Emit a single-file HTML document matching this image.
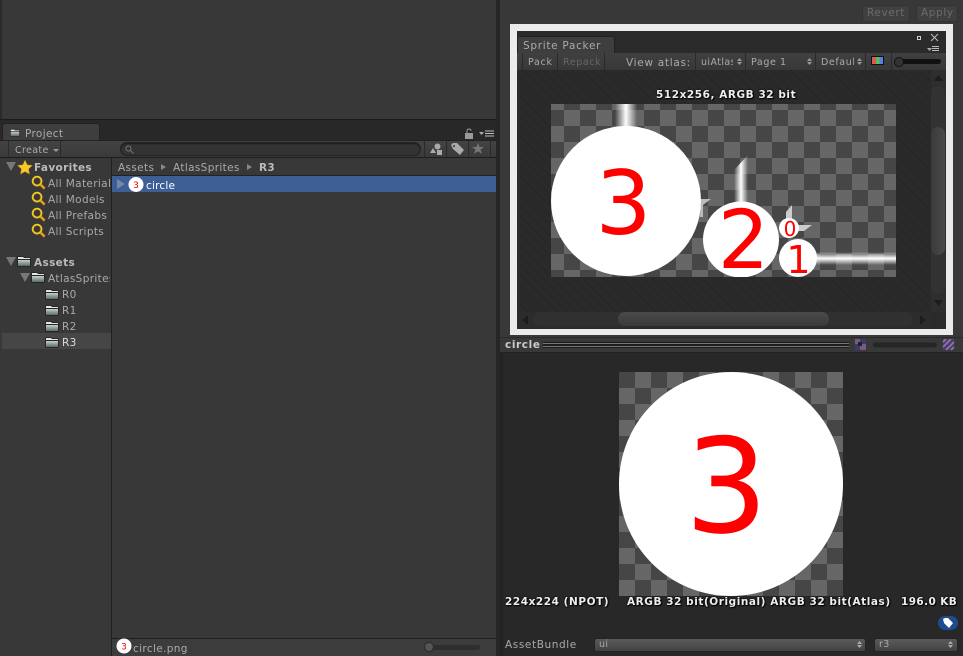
<!DOCTYPE html>
<html><head><meta charset="utf-8"><style>
html,body{margin:0;padding:0;background:#383838}
#r{position:relative;width:963px;height:656px;overflow:hidden;background:#383838;font:10.5px "DejaVu Sans","Liberation Sans",sans-serif;color:#aaa}
#r div,#r span.t,#r svg{position:absolute}
.t{position:absolute;white-space:nowrap;line-height:14px;letter-spacing:.35px}
.b{font-weight:bold;color:#bbb}
.s{font-weight:bold;color:#eee;text-shadow:0 0 2px #000,1px 1px 1px #000;font-size:10.5px;letter-spacing:.55px}
.sep{background:#2a2a2a;width:1px}
.hatch{background-color:#2a2a2a;background-image:repeating-linear-gradient(45deg,#262626 0,#262626 1px,transparent 1px,transparent 7px)}
.dd{background:linear-gradient(#5a5a5a,#434343);border:1px solid #252525;border-radius:3px;height:12px}
</style></head><body><div id="r">
<svg width="0" height="0" style="width:0;height:0"><defs>
<linearGradient id="fg" x2="0" y2="1"><stop offset="0" stop-color="#c4d0d0"/><stop offset="1" stop-color="#5c6a6a"/></linearGradient>
<symbol id="fold" viewBox="0 0 14 12"><path d="M0 2l1-1h5l1 1h6l1 1v8l-1 1H1l-1-1z" fill="#262626"/><path d="M1 2h5l1 1h6v1H1z" fill="#e4e4e4"/><rect x="1" y="5" width="12" height="6" fill="url(#fg)"/></symbol>
<symbol id="mag" viewBox="0 0 16 16"><circle cx="6.500" cy="6.500" r="4.700" fill="none" stroke="#f4c51e" stroke-width="2"/><path d="M10 10l4.500 4.500" stroke="#e0a510" stroke-width="2.600"/></symbol>
</defs></svg>

<!-- top-left panel -->
<div style="left:0;top:0;width:2px;height:119px;background:#2a2a2a"></div>
<div style="left:0;top:119px;width:497px;height:21px;background:#282828;border-top:1px solid #1c1c1c;box-sizing:border-box"></div>
<div style="left:2px;top:123px;width:98px;height:17px;background:#3e3e3e;border-radius:3px 3px 0 0;border:1px solid #222;border-bottom:0;box-sizing:border-box"></div>
<svg style="left:10px;top:128px" width="10" height="9"><use href="#fold"/></svg>
<span class="t" style="left:25px;top:127px">Project</span>
<svg style="left:465px;top:128px" width="30" height="11" viewBox="0 0 30 11"><path d="M2 5V3q0-2 2-2t2 2" fill="none" stroke="#999"/><rect x="0" y="5" width="8" height="6" fill="#999"/><path d="M14 4h5l-2.500 3z" fill="#aaa"/><path d="M20 3h9M20 5.500h9M20 8h9" stroke="#bbb" stroke-width="1"/></svg>

<!-- project toolbar -->
<div style="left:0;top:140px;width:497px;height:18px;background:linear-gradient(#434343,#3a3a3a);border-top:1px solid #222;border-bottom:1px solid #1e1e1e;box-sizing:border-box"></div>
<div class="sep" style="left:8px;top:141px;height:16px"></div>
<div class="sep" style="left:60px;top:141px;height:16px"></div>
<span class="t" style="left:15px;top:144px;font-size:9.5px">Create</span>
<svg style="left:53px;top:149px" width="6" height="4"><path d="M0 0h6l-3 3z" fill="#999"/></svg>
<div style="left:120px;top:142px;width:301px;height:14px;border-radius:7px;background:#333;border:1px solid #222;box-sizing:border-box;box-shadow:inset 0 1px 1px #1d1d1d"></div>
<svg style="left:125px;top:145px" width="9" height="9" viewBox="0 0 9 9"><circle cx="3.500" cy="3.500" r="2.500" fill="none" stroke="#777"/><path d="M5.500 5.500l3 3" stroke="#777"/></svg>
<div class="sep" style="left:424px;top:141px;height:16px"></div>
<div class="sep" style="left:446px;top:141px;height:16px"></div>
<div class="sep" style="left:468px;top:141px;height:16px"></div>
<div class="sep" style="left:490px;top:141px;height:16px"></div>
<svg style="left:430px;top:143px" width="12" height="12" viewBox="0 0 12 12"><path d="M0 10l3-5 3 5z" fill="#aaa"/><circle cx="7.500" cy="3.500" r="3" fill="#aaa"/><rect x="7" y="7" width="5" height="5" fill="#aaa"/></svg>
<svg style="left:451px;top:143px" width="13" height="12" viewBox="0 0 13 12"><path d="M0 2l2-2h4l7 7-4 5-7-6z" fill="#aaa"/><circle cx="3" cy="3" r="1" fill="#3a3a3a"/></svg>
<svg style="left:472px;top:143px" width="12" height="11" viewBox="0 0 12 11"><path d="M6 0l1.500 4H12L8.500 6.500 10 11 6 8.300 2 11l1.500-4.500L0 4h4.500z" fill="#777"/></svg>

<!-- sidebar -->
<div style="left:111px;top:158px;width:1px;height:498px;background:#202020"></div>
<svg style="left:6px;top:162px" width="10" height="9"><path d="M0 0h10l-5 9z" fill="#777"/></svg>
<svg style="left:17px;top:159px" width="16" height="16" viewBox="0 0 16 16"><path d="M8 1l2.200 4.800 5.300.6-3.900 3.600 1 5.200L8 12.600l-4.600 2.600 1-5.200L.5 6.400l5.300-.6z" fill="#f7c92c" stroke="#a97f10" stroke-width=".5"/></svg>
<span class="t b" style="left:34px;top:161px">Favorites</span>
<svg style="left:31px;top:175px" width="15" height="15"><use href="#mag"/></svg><span class="t" style="left:48px;top:177px;width:63px;overflow:hidden">All Materials</span>
<svg style="left:31px;top:191px" width="15" height="15"><use href="#mag"/></svg><span class="t" style="left:48px;top:193px">All Models</span>
<svg style="left:31px;top:207px" width="15" height="15"><use href="#mag"/></svg><span class="t" style="left:48px;top:209px">All Prefabs</span>
<svg style="left:31px;top:223px" width="15" height="15"><use href="#mag"/></svg><span class="t" style="left:48px;top:225px">All Scripts</span>

<svg style="left:6px;top:257px" width="10" height="9"><path d="M0 0h10l-5 9z" fill="#777"/></svg>
<svg style="left:17px;top:255px" width="14" height="12"><use href="#fold"/></svg>
<span class="t b" style="left:34px;top:256px">Assets</span>
<svg style="left:20px;top:273px" width="10" height="9"><path d="M0 0h10l-5 9z" fill="#777"/></svg>
<svg style="left:31px;top:271px" width="14" height="12"><use href="#fold"/></svg>
<span class="t" style="left:48px;top:272px;width:62px;overflow:hidden">AtlasSprites</span>
<svg style="left:45px;top:288px" width="14" height="12"><use href="#fold"/></svg><span class="t" style="left:62px;top:288px">R0</span>
<svg style="left:45px;top:304px" width="14" height="12"><use href="#fold"/></svg><span class="t" style="left:62px;top:304px">R1</span>
<svg style="left:45px;top:320px" width="14" height="12"><use href="#fold"/></svg><span class="t" style="left:62px;top:320px">R2</span>
<div style="left:2px;top:333px;width:109px;height:16px;background:#464646"></div>
<svg style="left:45px;top:336px" width="14" height="12"><use href="#fold"/></svg><span class="t" style="left:62px;top:336px;color:#ddd">R3</span>

<!-- breadcrumb + list -->
<span class="t" style="left:118px;top:161px">Assets</span>
<svg style="left:161px;top:164px" width="6" height="6"><path d="M0 0l5 3-5 3z" fill="#888"/></svg>
<span class="t" style="left:173px;top:161px">AtlasSprites</span>
<svg style="left:247px;top:164px" width="6" height="6"><path d="M0 0l5 3-5 3z" fill="#888"/></svg>
<span class="t b" style="left:259px;top:161px">R3</span>
<div style="left:112px;top:175px;width:384px;height:1px;background:#222"></div>
<div style="left:112px;top:176px;width:384px;height:16px;background:#3e5f96"></div>
<svg style="left:117px;top:179px" width="8" height="10"><path d="M0 0l8 5-8 5z" fill="#7387a8"/></svg>
<svg style="left:128px;top:177px" width="16" height="16" viewBox="0 0 16 16"><circle cx="8" cy="7.500" r="7.500" fill="#fff"/><text x="8" y="11" text-anchor="middle" font-family="DejaVu Sans" font-size="9" fill="#e00">3</text></svg>
<span class="t" style="left:146px;top:179px;color:#fff;letter-spacing:.2px">circle</span>

<!-- bottom status -->
<div style="left:112px;top:638px;width:385px;height:18px;background:#3c3c3c;border-top:1px solid #202020;box-sizing:border-box"></div>
<svg style="left:116px;top:638px" width="16" height="16" viewBox="0 0 16 16"><circle cx="8" cy="8" r="7.500" fill="#fff"/><text x="8" y="11.500" text-anchor="middle" font-family="DejaVu Sans" font-size="9" fill="#e00">3</text></svg>
<span class="t" style="left:133px;top:642px">circle.png</span>
<div style="left:424px;top:645px;width:56px;height:5px;background:#2e2e2e;border-radius:3px"></div>
<div style="left:424px;top:642px;width:10px;height:10px;background:#555;border:1px solid #2a2a2a;box-sizing:border-box;border-radius:50%"></div>

<!-- vertical divider -->
<div style="left:496px;top:0;width:4px;height:656px;background:#262626"></div>

<!-- revert apply -->
<div style="left:862px;top:5px;width:48px;height:17px;background:#404040;border:1px solid #333;border-radius:3px;box-sizing:border-box"></div>
<span class="t" style="left:867px;top:6px;line-height:15px;color:#6c6c6c;letter-spacing:.6px">Revert</span>
<div style="left:916px;top:5px;width:42px;height:17px;background:#404040;border:1px solid #333;border-radius:3px;box-sizing:border-box"></div>
<span class="t" style="left:921px;top:6px;line-height:15px;color:#6c6c6c;letter-spacing:.6px">Apply</span>

<!-- sprite packer window -->
<div style="left:510px;top:24px;width:443px;height:311px;background:#ebebeb"></div>
<div style="left:517px;top:31px;width:429px;height:298px;background:#2a2a2a"></div>
<div style="left:517px;top:36px;width:98px;height:17px;background:#3e3e3e;border-radius:3px 3px 0 0;border:1px solid #222;border-bottom:0;box-sizing:border-box"></div>
<span class="t" style="left:523px;top:39px;letter-spacing:.7px">Sprite Packer</span>
<svg style="left:916px;top:33px" width="24" height="20" viewBox="0 0 24 20"><rect x="1.500" y="3.500" width="3" height="3" fill="none" stroke="#ccc"/><path d="M15 1l7 7M22 1l-7 7" stroke="#bbb"/><path d="M11 15h5l-2.500 3z" fill="#aaa"/><path d="M16 13.500h7M16 15.500h7M16 17.500h7" stroke="#bbb"/></svg>
<div style="left:517px;top:53px;width:429px;height:17px;background:linear-gradient(#404040,#383838);border-bottom:1px solid #202020"></div>
<div class="sep" style="left:522px;top:53px;height:17px"></div>
<div class="sep" style="left:557px;top:53px;height:17px"></div>
<div class="sep" style="left:604px;top:53px;height:17px"></div>
<span class="t" style="left:528px;top:55px;line-height:15px;font-size:9.5px;letter-spacing:.7px">Pack</span>
<span class="t" style="left:563px;top:55px;line-height:15px;font-size:9.5px;letter-spacing:.6px;color:#666">Repack</span>
<span class="t" style="left:626px;top:56px;letter-spacing:.7px">View atlas:</span>
<div class="sep" style="left:695px;top:53px;height:17px"></div>
<span class="t" style="left:701px;top:55px;line-height:15px;font-size:9.5px;letter-spacing:.4px;width:32px;overflow:hidden">uiAtlas</span>
<div class="sep" style="left:745px;top:53px;height:17px"></div>
<span class="t" style="left:751px;top:55px;line-height:15px;font-size:9.5px;letter-spacing:.6px">Page 1</span>
<div class="sep" style="left:815px;top:53px;height:17px"></div>
<span class="t" style="left:821px;top:55px;line-height:15px;font-size:9.5px;letter-spacing:.6px;width:33px;overflow:hidden">Default</span>
<div class="sep" style="left:865px;top:53px;height:17px"></div>
<div class="sep" style="left:891px;top:53px;height:17px"></div>
<svg style="left:737px;top:58px" width="5" height="7" viewBox="0 0 5 7"><path d="M0 3L2.500 0 5 3zM0 4L2.500 7 5 4z" fill="#999"/></svg>
<svg style="left:807px;top:58px" width="5" height="7" viewBox="0 0 5 7"><path d="M0 3L2.500 0 5 3zM0 4L2.500 7 5 4z" fill="#999"/></svg>
<svg style="left:857px;top:58px" width="5" height="7" viewBox="0 0 5 7"><path d="M0 3L2.500 0 5 3zM0 4L2.500 7 5 4z" fill="#999"/></svg>
<svg style="left:871px;top:56px" width="13" height="9" viewBox="0 0 13 9"><rect width="13" height="9" fill="#111"/><rect x="1" y="1" width="4" height="7" fill="#e05555"/><rect x="5" y="1" width="3.500" height="7" fill="#55c055"/><rect x="8.500" y="1" width="3.500" height="7" fill="#5580e0"/></svg>
<div style="left:895px;top:59px;width:46px;height:5px;background:#111;border-radius:3px"></div>
<div style="left:894px;top:57px;width:10px;height:10px;background:#333;border:1px solid #111;box-sizing:border-box;border-radius:50%"></div>

<!-- atlas area -->
<div class="hatch" style="left:517px;top:70px;width:414px;height:242px"></div>
<span class="t s" style="left:656px;top:88px">512x256, ARGB 32 bit</span>
<svg style="left:551px;top:104px" width="345" height="173" viewBox="551 104 345 173">
<defs>
<pattern id="ck" x="548" y="110" width="32" height="32" patternUnits="userSpaceOnUse"><rect width="32" height="32" fill="#666"/><rect width="16" height="16" fill="#464646"/><rect x="16" y="16" width="16" height="16" fill="#464646"/></pattern>
<linearGradient id="gv"><stop offset="0" stop-color="#fff" stop-opacity="0"/><stop offset=".5" stop-color="#fff"/><stop offset="1" stop-color="#fff" stop-opacity="0"/></linearGradient>
<linearGradient id="gh" x2="0" y2="1"><stop offset="0" stop-color="#fff" stop-opacity="0"/><stop offset=".5" stop-color="#fff"/><stop offset="1" stop-color="#fff" stop-opacity="0"/></linearGradient></defs>
<rect x="551" y="104" width="345" height="173" fill="url(#ck)"/>
<rect x="615" y="104" width="22" height="30" fill="url(#gv)"/>
<path d="M734 170l14-15v50h-14z" fill="url(#gv)"/>
<path d="M701 199h10l-8 6v12h-3z" fill="#bbb"/>
<path d="M786 220v-8l6-7v17zM794 225h18l-8 6h-10z" fill="#ccc"/>
<rect x="815" y="252" width="81" height="13" fill="url(#gh)"/>
<circle cx="626" cy="201" r="75" fill="#fff"/><circle cx="741" cy="239.500" r="38" fill="#fff"/><circle cx="798" cy="258" r="19" fill="#fff"/><circle cx="789" cy="228" r="10" fill="#fff"/>
<g font-family="DejaVu Sans" fill="#f00" text-anchor="middle"><text x="623.500" y="234" font-size="88">3</text><text x="743.500" y="268" font-size="81">2</text><text x="798.500" y="273" font-size="38">1</text><text x="790" y="236" font-size="20">0</text></g>
</svg>

<!-- scrollbars -->
<div style="left:931px;top:70px;width:15px;height:242px;background:#2e2e2e"></div>
<svg style="left:933px;top:74px" width="11" height="8"><path d="M1 7l4.500-6 4.500 6z" fill="#1c1c1c"/></svg>
<div style="left:931px;top:86px;width:14px;height:208px;background:#323232;border-radius:7px"></div>
<div style="left:931px;top:127px;width:14px;height:128px;background:linear-gradient(90deg,#3a3a3a,#4a4a4a);border-radius:7px"></div>
<svg style="left:933px;top:299px" width="11" height="8"><path d="M1 1l4.500 6 4.500-6z" fill="#1c1c1c"/></svg>
<div style="left:517px;top:312px;width:414px;height:16px;background:#2c2c2c"></div>
<svg style="left:521px;top:315px" width="8" height="10"><path d="M7 0L1 5l6 5z" fill="#1c1c1c"/></svg>
<div style="left:533px;top:312px;width:380px;height:14px;background:#303030;border-radius:7px"></div>
<div style="left:618px;top:312px;width:211px;height:14px;background:linear-gradient(#4a4a4a,#3a3a3a);border-radius:7px"></div>
<svg style="left:919px;top:315px" width="8" height="10"><path d="M1 0l6 5-6 5z" fill="#1c1c1c"/></svg>

<!-- preview header -->
<div style="left:500px;top:337px;width:463px;height:16px;background:#383838;border-top:1px solid #2a2a2a;border-bottom:1px solid #222;box-sizing:border-box"></div>
<span class="t" style="left:505px;top:338px;font-weight:bold;color:#ccc;letter-spacing:.6px">circle</span>
<svg style="left:543px;top:342px" width="306" height="6"><rect width="306" height="6" fill="#1c1c1c"/><rect y="1" width="306" height="1" fill="#777"/><rect y="4" width="306" height="1" fill="#777"/></svg>
<svg style="left:855px;top:339px" width="108" height="12" viewBox="0 0 108 12"><rect width="11" height="11" fill="#3c3a6a"/><rect x="0" y="0" width="5" height="5" fill="#7a5a80"/><rect x="5" y="5" width="6" height="6" fill="#7a5a80"/><rect x="3" y="3" width="4" height="4" fill="#222"/><rect x="18" y="3.500" width="64" height="5" rx="2.500" fill="#262626"/><rect x="88" y="0" width="11" height="11" fill="#4a3f78"/><path d="M88 8l8-8M91 11l8-8M88 3l3-3M96 11l3-3" stroke="#a07a9a" stroke-width="1.500"/></svg>

<!-- preview -->
<div style="left:500px;top:353px;width:463px;height:303px;background:#282828"></div>
<div style="left:500px;top:353px;width:3px;height:303px;background:#222"></div>
<svg style="left:619px;top:372px" width="224" height="224" viewBox="0 0 224 224">
<defs><pattern id="ck2" width="32" height="32" patternUnits="userSpaceOnUse"><rect width="32" height="32" fill="#666"/><rect width="16" height="16" fill="#464646"/><rect x="16" y="16" width="16" height="16" fill="#464646"/></pattern></defs>
<rect width="224" height="224" fill="url(#ck2)"/><circle cx="112" cy="112" r="112" fill="#fff"/>
<text x="107.500" y="160" font-family="DejaVu Sans" font-size="131" fill="#f00" text-anchor="middle">3</text></svg>
<span class="t s" style="left:505px;top:595px">224x224 (NPOT)</span>
<span class="t s" style="left:627px;top:595px">ARGB 32 bit(Original) ARGB 32 bit(Atlas)</span>
<span class="t s" style="left:901px;top:595px;letter-spacing:.4px">196.0 KB</span>
<div style="left:938px;top:616px;width:20px;height:14px;background:#1f4c8f;border-radius:7px"></div>
<svg style="left:942px;top:617px" width="12" height="12" viewBox="0 0 12 12"><path d="M1 2l2-1h3l5 5-4 5-5-5z" fill="#fff"/></svg>
<span class="t" style="left:505px;top:638px;letter-spacing:.6px">AssetBundle</span>
<div class="dd" style="left:594px;top:638px;width:270px"></div>
<span class="t" style="left:599px;top:638px;font-size:9.5px">ui</span>
<svg style="left:857px;top:641px" width="5" height="7" viewBox="0 0 5 7"><path d="M0 3L2.500 0 5 3zM0 4L2.500 7 5 4z" fill="#aaa"/></svg>
<div class="dd" style="left:874px;top:638px;width:82px"></div>
<span class="t" style="left:879px;top:638px;font-size:9.5px">r3</span>
<svg style="left:948px;top:641px" width="5" height="7" viewBox="0 0 5 7"><path d="M0 3L2.500 0 5 3zM0 4L2.500 7 5 4z" fill="#aaa"/></svg>
</div></body></html>
